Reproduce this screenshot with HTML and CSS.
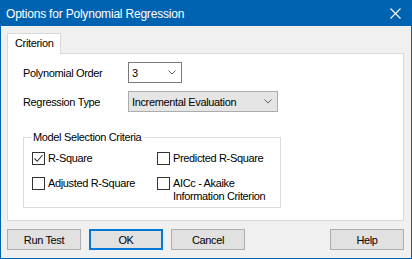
FILE: index.html
```html
<!DOCTYPE html>
<html lang="en">
<head>
  <meta charset="UTF-8" />
  <title>Options for Polynomial Regression</title>
  <link rel="stylesheet" href="styles.css">
</head>
<body>
  <div class="window">
    <div class="titlebar">
      <span class="title">Options for Polynomial Regression</span>
      <svg class="close" width="11" height="11" viewBox="0 0 11 11">
        <path d="M0.5 0.5 L10.5 10.5 M10.5 0.5 L0.5 10.5" stroke="#ffffff" stroke-width="1.1" fill="none" />
      </svg>
    </div>

    <div class="tabs">
      <div class="tab active">Criterion</div>
    </div>

    <div class="tab-page">
      <div class="field-row">
        <label class="field-label">Polynomial Order</label>
        <div class="combo combo-edit">
          <span>3</span>
          <svg class="chevron" width="8" height="5" viewBox="0 0 8 5">
            <path d="M0.5 0.5 L4 4 L7.5 0.5" stroke="#606060" fill="none" />
          </svg>
        </div>
      </div>

      <div class="field-row">
        <label class="field-label">Regression Type</label>
        <div class="combo combo-list">
          <span>Incremental Evaluation</span>
          <svg class="chevron" width="8" height="5" viewBox="0 0 8 5">
            <path d="M0.5 0.5 L4 4 L7.5 0.5" stroke="#606060" fill="none" />
          </svg>
        </div>
      </div>

      <fieldset class="group">
        <legend>Model Selection Criteria</legend>
        <div class="check-grid">
          <label class="check">
            <span class="box">
              <svg width="11" height="11" viewBox="0 0 11 11">
                <path d="M1.5 5.5 L4.2 8.3 L9.5 2" stroke="#333333" stroke-width="1.1" fill="none" />
              </svg>
            </span>
            <span>R-Square</span>
          </label>
          <label class="check check-wide">
            <span class="box"></span>
            <span>Predicted R-Square</span>
          </label>
          <label class="check">
            <span class="box"></span>
            <span>Adjusted R-Square</span>
          </label>
          <label class="check">
            <span class="box"></span>
            <span>AICc - Akaike<br>Information Criterion</span>
          </label>
        </div>
      </fieldset>
    </div>

    <div class="buttons">
      <button class="btn">Run Test</button>
      <button class="btn btn-default">OK</button>
      <button class="btn">Cancel</button>
      <button class="btn btn-help">Help</button>
    </div>
  </div>
</body>
</html>
```

FILE: styles.css
```css
* {
  box-sizing: border-box;
  margin: 0;
  padding: 0;
}

body {
  font-family: 'Liberation Sans', Arial, sans-serif;
  font-size: 11px;
  letter-spacing: -0.35px;
  color: #000000;
  background: #f0f0f0;
}

.window {
  width: 412px;
  height: 259px;
  border: 1px solid #0063b1;
  background: #f0f0f0;
  display: flex;
  flex-direction: column;
}

.titlebar {
  height: 25px;
  flex-shrink: 0;
  background: #0063b1;
  color: #ffffff;
  display: flex;
  align-items: center;
  justify-content: space-between;
  padding: 0 10px 0 5px;
}

.title {
  font-size: 12px;
  letter-spacing: -0.2px;
}

.tabs {
  display: flex;
  margin: 7px 0 0 6px;
}

.tab {
  position: relative;
  z-index: 1;
  height: 21px;
  margin-bottom: -1px;
  padding: 3px 7px 0 7px;
  background: #ffffff;
  border: 1px solid #d9d9d9;
  border-bottom: none;
}

.tab-page {
  width: 397px;
  height: 168px;
  flex-shrink: 0;
  margin-left: 6px;
  background: #ffffff;
  border: 1px solid #d9d9d9;
  padding: 8px 0 0 15px;
}

.field-row {
  display: flex;
  align-items: center;
  height: 21px;
  margin-bottom: 8px;
}

.field-label {
  width: 105px;
}

.combo {
  height: 21px;
  display: flex;
  align-items: center;
  justify-content: space-between;
  padding: 0 5px 0 3px;
}

.combo-edit {
  width: 54px;
  background: #ffffff;
  border: 1px solid #7a7a7a;
}

.combo-list {
  width: 150px;
  background: #e5e5e5;
  border: 1px solid #acacac;
}

.group {
  width: 255px;
  height: 77px;
  margin-top: 19px;
  border: 1px solid #dcdcdc;
  padding: 8px 0 0 8px;
}

.group legend {
  padding: 0 2px;
  margin-left: -1px;
}

.check-grid {
  display: grid;
  grid-template-columns: 125px 123px;
  row-gap: 9px;
}

.check {
  display: flex;
  align-items: flex-start;
  gap: 3px;
  line-height: 13px;
  padding-top: 1px;
  background: #ffffff;
}

.check-wide {
  height: 16px;
}

.box {
  width: 13px;
  height: 13px;
  flex-shrink: 0;
  border: 1px solid #333333;
  background: #ffffff;
  display: flex;
}

.buttons {
  display: flex;
  gap: 8px;
  margin: 8px 0 0 6px;
}

.btn {
  width: 74px;
  height: 21px;
  font-family: inherit;
  font-size: 11px;
  letter-spacing: -0.35px;
  background: #e1e1e1;
  border: 1px solid #adadad;
  color: #000000;
}

.btn-default {
  border: 2px solid #0078d7;
}

.btn-help {
  margin-left: auto;
  margin-right: 7px;
}
```
